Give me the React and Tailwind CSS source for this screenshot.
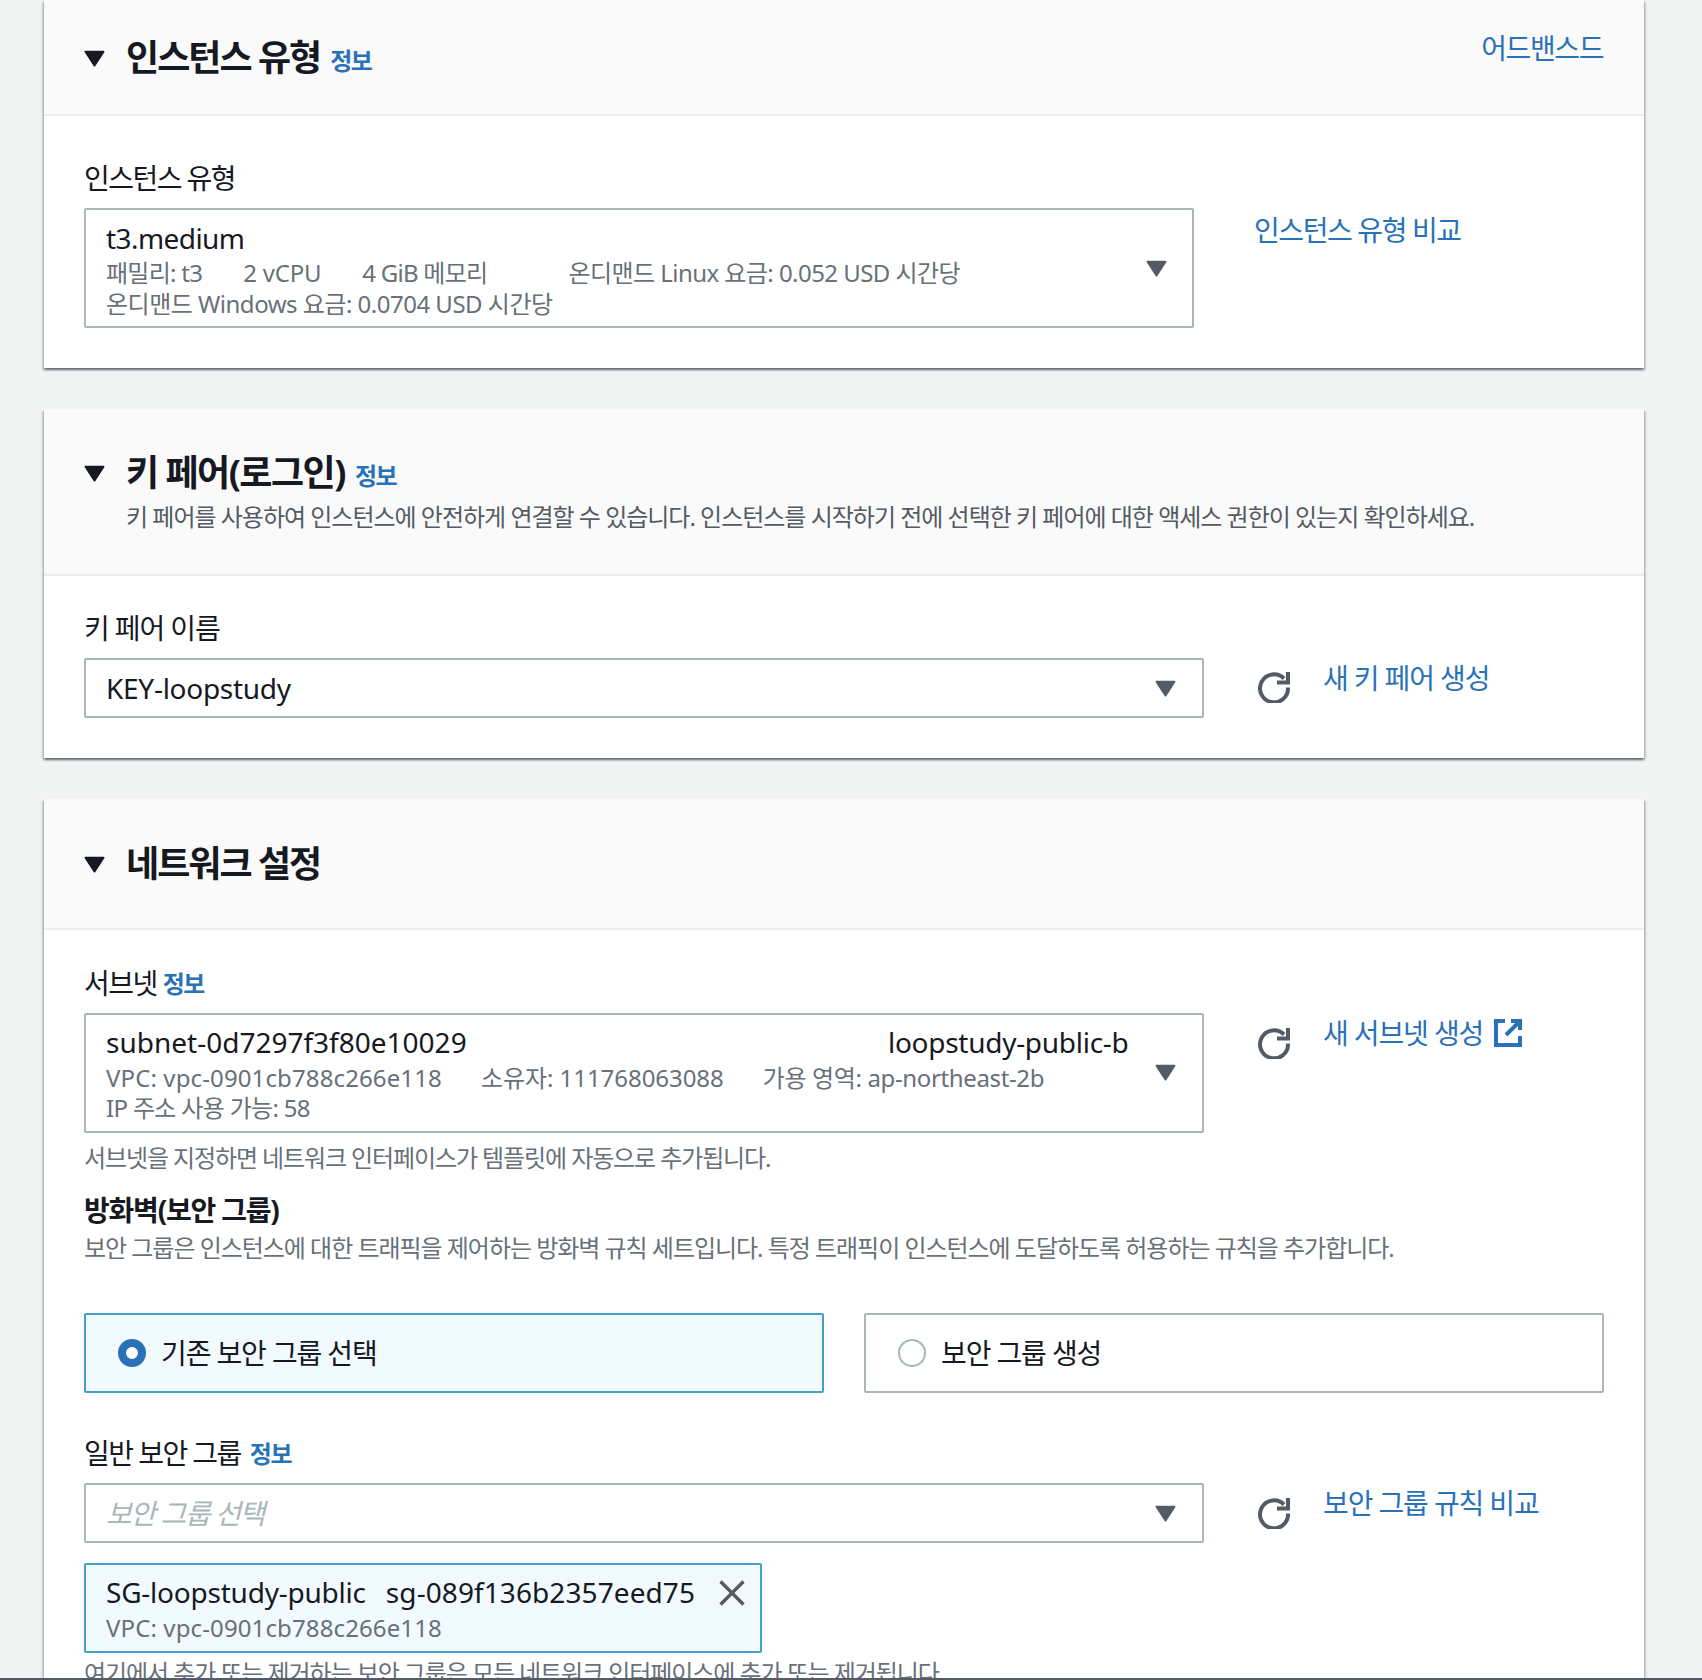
import React from 'react';

const Caret = ({ className }) => (
    <svg viewBox="0 0 20 16" className={className} aria-hidden="true">
        <path d="M1.5 1.5h17L10 14.5z" fill="currentColor" stroke="currentColor" strokeWidth="2" strokeLinejoin="round" />
    </svg>
);

const RefreshIcon = () => (
    <svg viewBox="0 0 33 32" className="h-[32px] w-[33px] shrink-0 text-[#545b64]" fill="none" stroke="currentColor" strokeWidth="4" aria-hidden="true">
        <path d="M27 7.5A14 14 0 1 0 31 16.5" />
        <path d="M31 1v10.5H20" strokeWidth="4" />
    </svg>
);

const ExternalIcon = () => (
    <svg viewBox="0 0 28 28" className="ml-[11px] h-[28px] w-[28px] shrink-0 text-[#2a72b8]" fill="none" stroke="currentColor" strokeWidth="4" aria-hidden="true">
        <path d="M11 2H2v24h24V17" />
        <path d="M17 2h9v9M26 2L12 16" />
    </svg>
);

const Info = ({ className = '' }) => (
    <a className={`font-bold text-[24px] leading-[32px] tracking-[-0.06em] text-[#2a72b8] ${className}`}>정보</a>
);

const Panel = ({ title, info, description, extra, headerClass, bodyClass, children }) => (
    <section className="bg-white shadow-[0_2px_2px_0_rgba(0,28,36,0.45),2px_2px_2px_0_rgba(0,28,36,0.15),-2px_2px_2px_0_rgba(0,28,36,0.15)]">
        <div className={`relative border-b-2 border-[#eaeded] bg-[#fafafa] px-[40px] ${headerClass}`}>
            <div className="flex items-center">
                <Caret className="h-[17px] w-[21px] text-[#16191f]" />
                <h2 className="ml-[21px] text-[36px] leading-[44px] font-bold tracking-[-0.055em] text-[#16191f]">{title}</h2>
                {info && <Info className="ml-[10px] mt-[6px]" />}
            </div>
            {description && <p className="ml-[42px] mt-[5px] text-[24px] leading-[34px] tracking-[-0.042em] text-[#545b64]">{description}</p>}
            {extra}
        </div>
        <div className={`px-[40px] ${bodyClass}`}>{children}</div>
    </section>
);

const Label = ({ children, className = '' }) => (
    <div className={`flex items-center text-[28px] leading-[36px] tracking-[-0.055em] text-[#16191f] ${className}`}>{children}</div>
);

const Refresh = ({ children, top, linkTop, icon }) => (
    <div className="ml-[53px] flex items-start self-start">
        <div className={top}><RefreshIcon /></div>
        <a className={`ml-[33px] flex items-center text-[28px] leading-[36px] tracking-[-0.04em] text-[#2a72b8] ${linkTop}`}>{children}{icon}</a>
    </div>
);

export default function App() {
    return (
        <div className="h-[1680px] overflow-hidden bg-[#f2f3f3] font-['Noto_Sans','Noto_Sans_CJK_KR',sans-serif]">
            <div className="relative h-[1678px] overflow-hidden pl-[44px] pr-[58px]">
                {/* 인스턴스 유형 */}
                <Panel
                    title="인스턴스 유형"
                    info
                    headerClass="h-[116px] pt-[36px]"
                    bodyClass="pt-[44px] pb-[40px]"
                    extra={<a className="absolute right-[41px] top-[30px] text-[28px] leading-[36px] tracking-[-0.05em] text-[#2a72b8]">어드밴스드</a>}
                >
                    <Label>인스턴스 유형</Label>
                    <div className="mt-[12px] flex">
                        <div className="flex h-[120px] w-[1110px] justify-between rounded-[2px] border-2 border-[#aab7b8] pl-[20px] pr-[25px]">
                            <div>
                                <div className="mt-[10px] text-[28px] leading-[36px] tracking-[-0.02em] text-[#16191f]">t3.medium</div>
                                <div className="mt-[1px] flex text-[24px] leading-[31px] text-[#687078]">
                                    <span className="tracking-[-0.03em]">패밀리: t3</span>
                                    <span className="ml-[41px] tracking-[-0.01em]">2 vCPU</span>
                                    <span className="ml-[41px] tracking-[-0.03em]">4 GiB 메모리</span>
                                    <span className="ml-[81px] tracking-[-0.023em]">온디맨드 Linux 요금: 0.052 USD 시간당</span>
                                </div>
                                <div className="text-[24px] leading-[31px] tracking-[-0.021em] text-[#687078]">온디맨드 Windows 요금: 0.0704 USD 시간당</div>
                            </div>
                            <Caret className="mt-[50px] h-[17px] w-[21px] text-[#545b64]" />
                        </div>
                        <a className="ml-[60px] mt-[4px] text-[28px] leading-[36px] tracking-[-0.05em] text-[#2a72b8]">인스턴스 유형 비교</a>
                    </div>
                </Panel>

                {/* 키 페어 */}
                <div className="mt-[41px]">
                    <Panel
                        title={<span className="tracking-[-0.042em]">키 페어(로그인)</span>}
                        info
                        description="키 페어를 사용하여 인스턴스에 안전하게 연결할 수 있습니다. 인스턴스를 시작하기 전에 선택한 키 페어에 대한 액세스 권한이 있는지 확인하세요."
                        headerClass="h-[167px] pt-[42px]"
                        bodyClass="pt-[34px] pb-[40px]"
                    >
                        <Label><span className="tracking-[-0.04em]">키 페어 이름</span></Label>
                        <div className="mt-[12px] flex">
                            <div className="flex h-[60px] w-[1120px] items-center justify-between rounded-[2px] border-2 border-[#aab7b8] pl-[20px] pr-[26px]">
                                <span className="text-[28px] leading-[36px] tracking-[-0.01em] text-[#16191f]">KEY-loopstudy</span>
                                <Caret className="h-[17px] w-[21px] text-[#545b64]" />
                            </div>
                            <Refresh top="mt-[13px]" linkTop="mt-[2px]">새 키 페어 생성</Refresh>
                        </div>
                    </Panel>
                </div>

                {/* 네트워크 설정 */}
                <div className="mt-[41px]">
                    <Panel title="네트워크 설정" headerClass="h-[131px] pt-[43px]" bodyClass="pt-[35px] pb-[40px]">
                        <Label>서브넷<Info className="ml-[6px] mt-[2px]" /></Label>
                        <div className="mt-[12px] flex">
                            <div className="flex h-[120px] w-[1120px] justify-between rounded-[2px] border-2 border-[#aab7b8] pl-[20px] pr-[26px]">
                                <div className="w-[1040px]">
                                    <div className="mt-[9px] flex text-[28px] leading-[36px] text-[#16191f]">
                                        <span className="w-[782px]">subnet-0d7297f3f80e10029</span>
                                        <span className="tracking-[-0.01em]">loopstudy-public-b</span>
                                    </div>
                                    <div className="mt-[3px] flex text-[24px] leading-[30px] text-[#687078]">
                                        <span className="tracking-[0.005em]">VPC: vpc-0901cb788c266e118</span>
                                        <span className="ml-[39px] tracking-[-0.002em]">소유자: 111768063088</span>
                                        <span className="ml-[39px] tracking-[-0.015em]">가용 영역: ap-northeast-2b</span>
                                    </div>
                                    <div className="text-[24px] leading-[30px] tracking-[-0.028em] text-[#687078]">IP 주소 사용 가능: 58</div>
                                </div>
                                <Caret className="mt-[49px] h-[17px] w-[21px] text-[#545b64]" />
                            </div>
                            <Refresh top="mt-[14px]" linkTop="mt-[2px]" icon={<ExternalIcon />}>새 서브넷 생성</Refresh>
                        </div>
                        <p className="mt-[8px] text-[24px] leading-[34px] tracking-[-0.046em] text-[#687078]">서브넷을 지정하면 네트워크 인터페이스가 템플릿에 자동으로 추가됩니다.</p>
                        <h3 className="mt-[17px] text-[28px] leading-[36px] font-bold tracking-[-0.043em] text-[#16191f]">방화벽(보안 그룹)</h3>
                        <p className="mt-[3px] text-[24px] leading-[34px] tracking-[-0.043em] text-[#687078]">보안 그룹은 인스턴스에 대한 트래픽을 제어하는 방화벽 규칙 세트입니다. 특정 트래픽이 인스턴스에 도달하도록 허용하는 규칙을 추가합니다.</p>

                        <div className="mt-[48px] grid grid-cols-2 gap-[40px]">
                            <div className="flex h-[80px] items-center rounded-[2px] border-2 border-[#44a0c8] bg-[#f1faff] pl-[32px]">
                                <span className="h-[28px] w-[28px] rounded-full border-[8px] border-[#2a72b8] bg-white" />
                                <span className="ml-[15px] text-[28px] leading-[36px] tracking-[-0.04em] text-[#16191f]">기존 보안 그룹 선택</span>
                            </div>
                            <div className="flex h-[80px] items-center rounded-[2px] border-2 border-[#aab7b8] pl-[32px]">
                                <span className="h-[28px] w-[28px] rounded-full border-2 border-[#aab7b8] bg-white" />
                                <span className="ml-[15px] text-[28px] leading-[36px] tracking-[-0.04em] text-[#16191f]">보안 그룹 생성</span>
                            </div>
                        </div>

                        <Label className="mt-[42px]">일반 보안 그룹<Info className="ml-[9px] mt-[2px]" /></Label>
                        <div className="mt-[12px] flex">
                            <div className="flex h-[60px] w-[1120px] items-center justify-between rounded-[2px] border-2 border-[#aab7b8] pl-[20px] pr-[26px]">
                                <span className="text-[28px] leading-[36px] tracking-[-0.05em] text-[#aab7b8] italic">보안 그룹 선택</span>
                                <Caret className="h-[17px] w-[21px] text-[#545b64]" />
                            </div>
                            <Refresh top="mt-[14px]" linkTop="mt-[2px]">보안 그룹 규칙 비교</Refresh>
                        </div>
                        <div className="relative mt-[20px] h-[90px] w-[678px] rounded-[2px] border-2 border-[#44a0c8] bg-[#f1faff] pl-[20px]">
                            <div className="mt-[9px] flex text-[28px] leading-[36px] text-[#16191f]">
                                <span className="tracking-[-0.008em]">SG-loopstudy-public</span>
                                <span className="ml-[20px] tracking-[0.003em]">sg-089f136b2357eed75</span>
                            </div>
                            <div className="text-[24px] leading-[36px] tracking-[0.005em] text-[#687078]">VPC: vpc-0901cb788c266e118</div>
                            <svg viewBox="0 0 26 26" className="absolute right-[15px] top-[15px] h-[26px] w-[26px] text-[#545b64]" fill="none" stroke="currentColor" strokeWidth="3.4" aria-hidden="true">
                                <path d="M1.5 1.5l23 23M24.5 1.5l-23 23" />
                            </svg>
                        </div>
                        <p className="mt-[3px] text-[24px] leading-[34px] tracking-[-0.045em] text-[#687078]">여기에서 추가 또는 제거하는 보안 그룹은 모든 네트워크 인터페이스에 추가 또는 제거됩니다.</p>
                    </Panel>
                </div>
            </div>
            <div className="h-[2px] bg-[#545b64]" />
        </div>
    );
}
